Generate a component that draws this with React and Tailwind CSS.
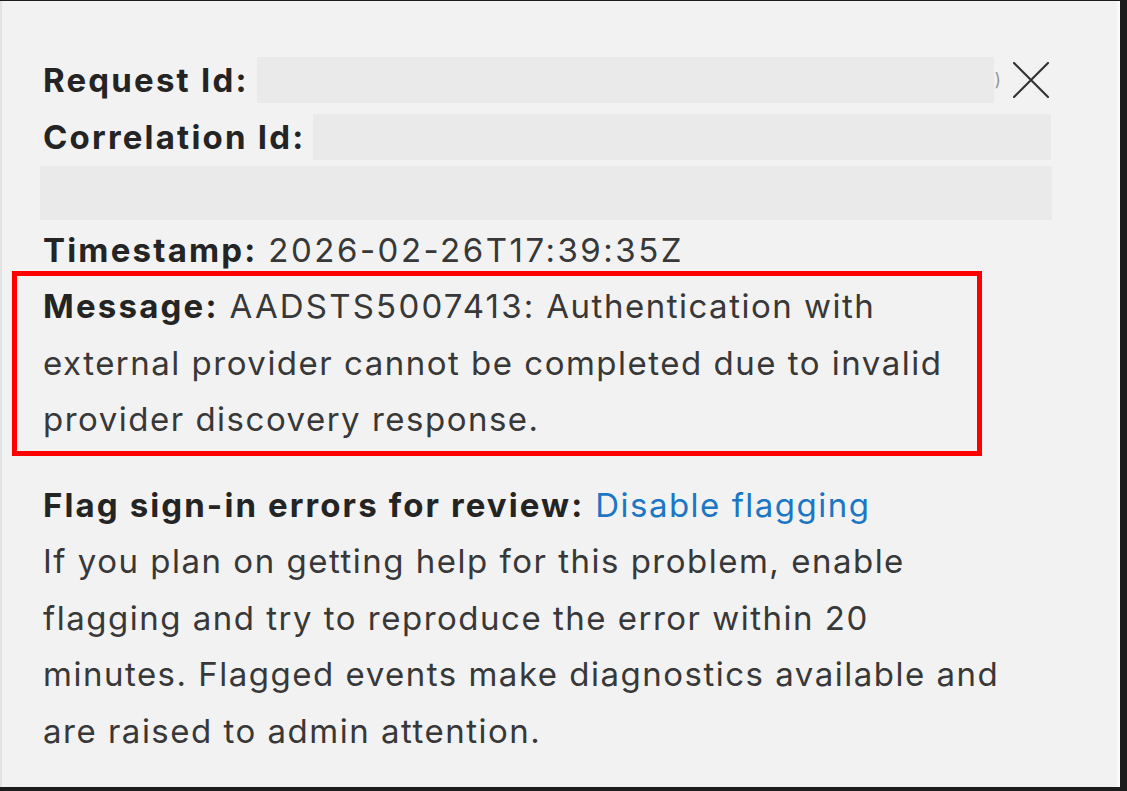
import React from "react";

const Redacted = ({ className }) => (
  <span className={"inline-block align-middle bg-[#eaeaea] " + className} />
);

const CloseIcon = () => (
  <svg width="36" height="36" viewBox="0 0 36 36" fill="none">
    <path d="M1 1L35 35M35 1L1 35" stroke="#333" strokeWidth="2.2" strokeLinecap="round" />
  </svg>
);

export default function App() {
  return (
    <div className="w-[1127px] h-[791px] bg-[#1c1c1c] pt-[1px] overflow-hidden">
      <div className="flex h-[786px] w-[1120px]">
        <div
          className="relative flex-1 bg-[#f2f2f2] border-l-2 border-[#e2e2e2] pl-[41px] pt-[51px] text-[33px] tracking-[1.5px] leading-[56.5px] text-[#383838]"
          style={{ fontFamily: "Inter, 'Liberation Sans', sans-serif" }}
        >
          <button className="absolute left-[1011px] top-[61px]">
            <CloseIcon />
          </button>

          <div className="flex items-center h-[56.5px] w-[958px]">
            <span className="font-bold text-[#242424] tracking-[2.2px]">Request Id:</span>
            <Redacted className="ml-[8px] flex-1 h-[46px]" />
            <span className="text-[#999] text-[18px] leading-none tracking-normal">)</span>
          </div>
          <div className="flex items-center h-[56.5px] w-[1008px]">
            <span className="font-bold text-[#242424] tracking-[2.2px]">Correlation Id:</span>
            <Redacted className="ml-[8px] flex-1 h-[46px]" />
          </div>
          <div className="flex items-center h-[56.5px] -ml-[3px]">
            <Redacted className="w-[1012px] h-[54px]" />
          </div>
          <div>
            <span className="font-bold text-[#242424] tracking-[2.2px]">Timestamp:</span>{" "}
            <span className="tracking-[2.5px]">2026-02-26T17:39:35Z</span>
          </div>

          <div className="-ml-[31px] -mt-[7px] w-[970px] border-[5px] border-[#ff0000] pl-[26px] pt-[2px] pb-[3px]">
            <span className="font-bold text-[#242424] tracking-[2.2px]">Message:</span>{" "}
            <span className="tracking-[2.2px]">AADSTS5007413:</span> Authentication with
            <br />
            external provider cannot be completed due to invalid
            <br />
            provider discovery response.
          </div>

          <div className="mt-[21px]">
            <span className="font-bold text-[#242424] tracking-[2.1px]">Flag sign-in errors for review:</span>{" "}
            <span className="text-[#1b76c4]">Disable flagging</span>
          </div>
          <div>
            If you plan on getting help for this problem, enable
            <br />
            flagging and try to reproduce the error within 20
            <br />
            minutes. Flagged events make diagnostics available and
            <br />
            are raised to admin attention.
          </div>
        </div>
        <div className="w-[4px] bg-gradient-to-r from-[#f4f4f4] to-[#fdfdfd]" />
      </div>
    </div>
  );
}
